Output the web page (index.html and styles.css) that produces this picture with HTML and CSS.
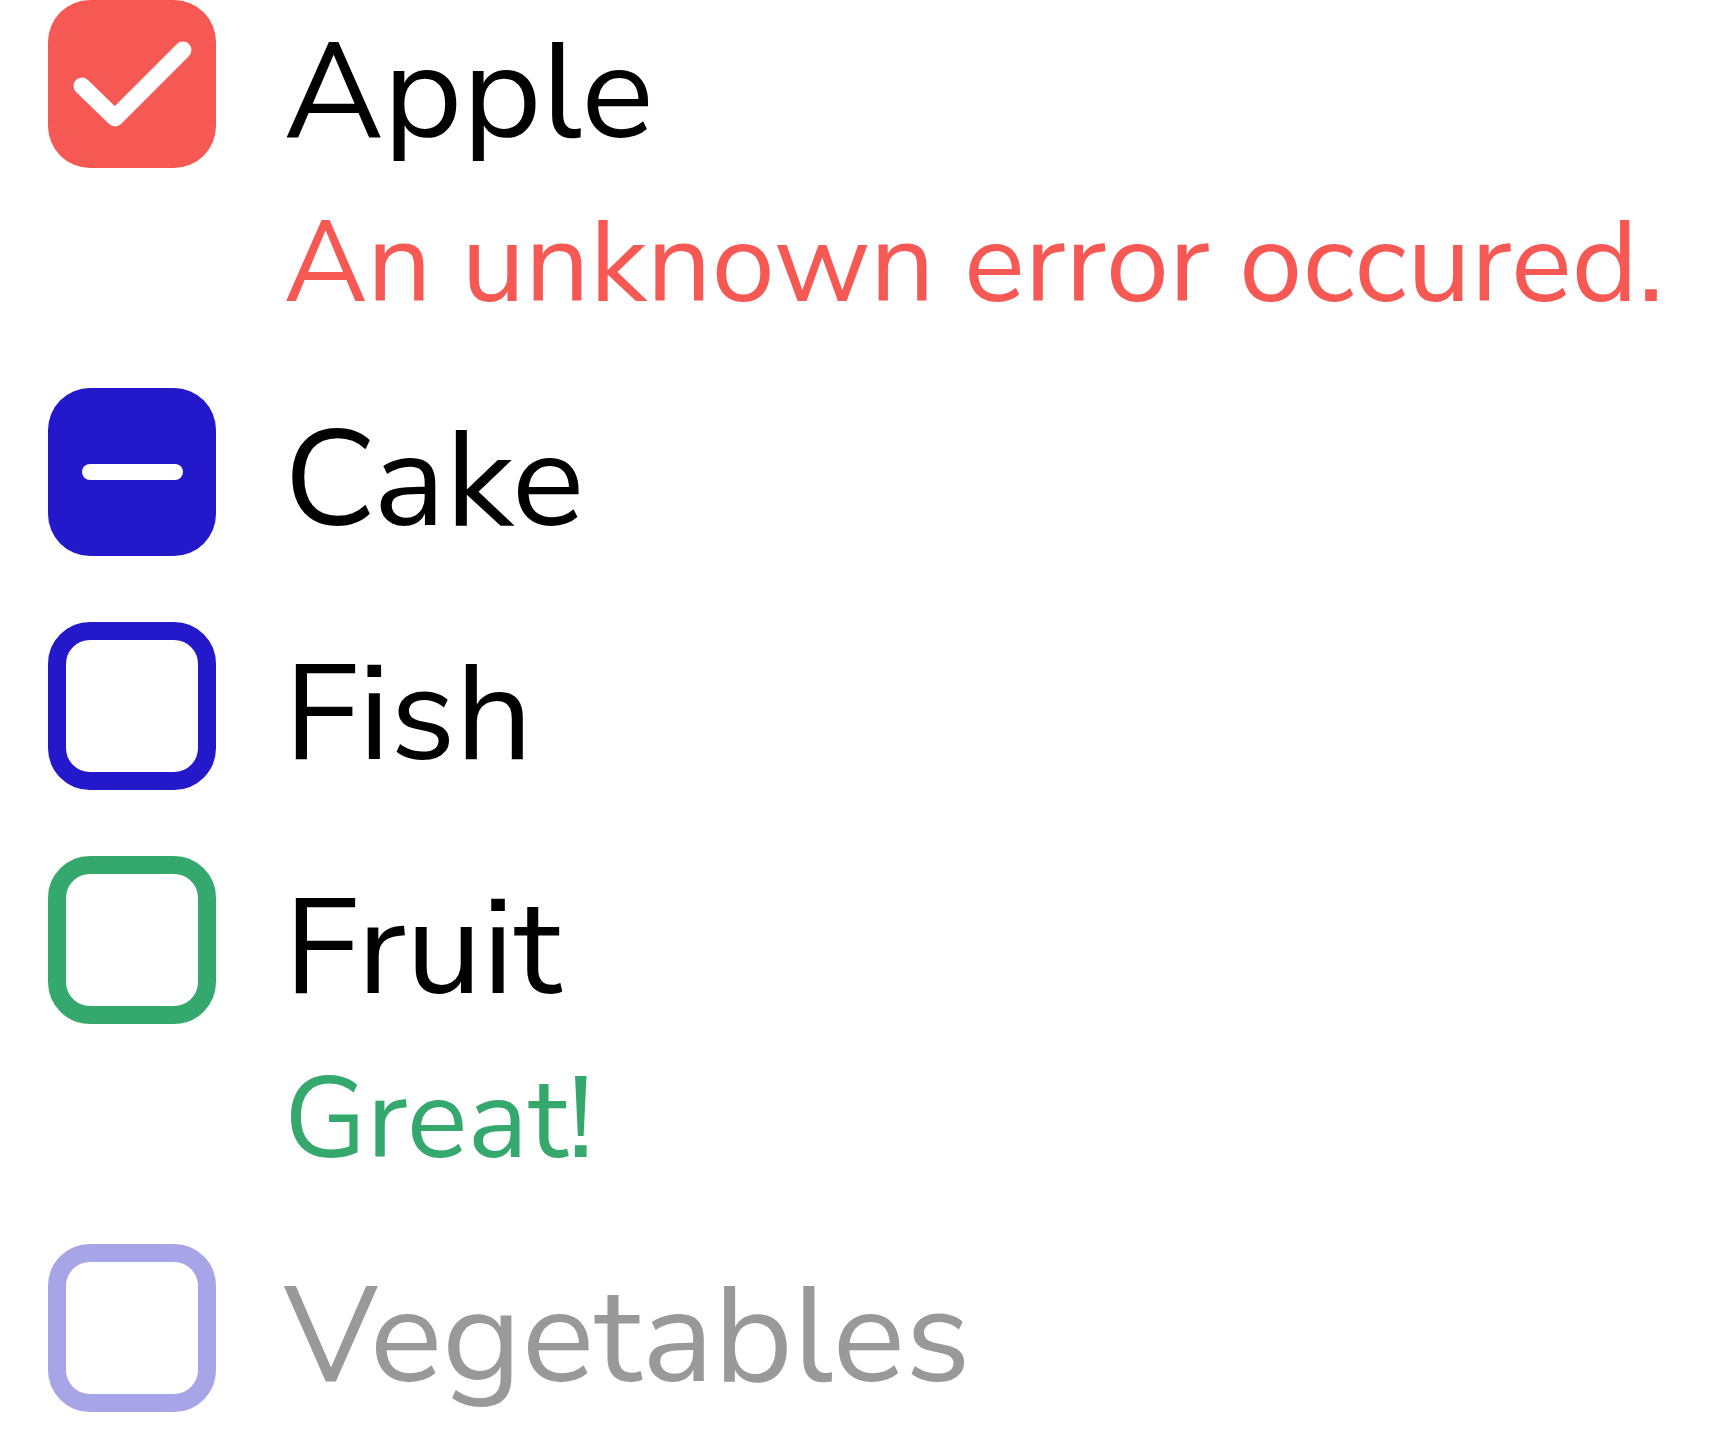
FILE: index.html
```html
<!DOCTYPE html>
<html lang="en">
<head>
<meta charset="utf-8">
<title>Checkboxes</title>
<link rel="stylesheet" href="styles.css">
</head>
<body>
<div class="list">
  <div class="item">
    <label class="row">
      <span class="box box-error">
        <svg class="mark" viewBox="0 0 168 168" width="168" height="168"><polyline points="34,86 67,118 135,50" fill="none" stroke="#fff" stroke-width="17" stroke-linecap="round" stroke-linejoin="round"/></svg>
      </span>
      <span class="label">Apple</span>
    </label>
    <div class="msg msg-error">An unknown error occured.</div>
  </div>
  <div class="item">
    <label class="row">
      <span class="box box-indeterminate"><span class="dash"></span></span>
      <span class="label">Cake</span>
    </label>
  </div>
  <div class="item">
    <label class="row">
      <span class="box box-outline"></span>
      <span class="label">Fish</span>
    </label>
  </div>
  <div class="item">
    <label class="row">
      <span class="box box-success"></span>
      <span class="label">Fruit</span>
    </label>
    <div class="msg msg-success">Great!</div>
  </div>
  <div class="item">
    <label class="row">
      <span class="box box-disabled"></span>
      <span class="label label-disabled">Vegetables</span>
    </label>
  </div>
</div>
</body>
</html>
```
FILE: styles.css
```css
html, body {
  margin: 0;
  padding: 0;
  background: #ffffff;
}
body {
  font-family: "Nunito Sans", "Nunito", "Open Sans", sans-serif;
  color: #000;
}
.list {
  display: flex;
  flex-direction: column;
  gap: 66px;
  padding-left: 48px;
}
.item {
  display: flex;
  flex-direction: column;
}
.row {
  display: flex;
  align-items: flex-start;
  gap: 68px;
  height: 168px;
}
.box {
  box-sizing: border-box;
  width: 168px;
  height: 168px;
  flex: 0 0 168px;
  border-radius: 42px;
  display: flex;
  align-items: center;
  justify-content: center;
  position: relative;
}
.mark {
  position: absolute;
  left: 0;
  top: 0;
}
.box-error {
  background: #f65854;
}
.box-indeterminate {
  background: #2319cb;
}
.dash {
  width: 101px;
  height: 16px;
  border-radius: 8px;
  background: #fff;
}
.box-outline {
  border: 18px solid #2319cb;
}
.box-success {
  border: 18px solid #35a86d;
}
.box-disabled {
  border: 18px solid #a7a4e7;
}
.label {
  font-size: 136px;
  line-height: 168px;
  padding-top: 9px;
}
.label-disabled {
  color: #999999;
}
.msg {
  padding-left: 236px;
  padding-top: 38px;
  font-size: 114px;
  line-height: 116px;
  white-space: nowrap;
}
.msg-error {
  color: #f65854;
}
.msg-success {
  color: #35a86d;
}
```
